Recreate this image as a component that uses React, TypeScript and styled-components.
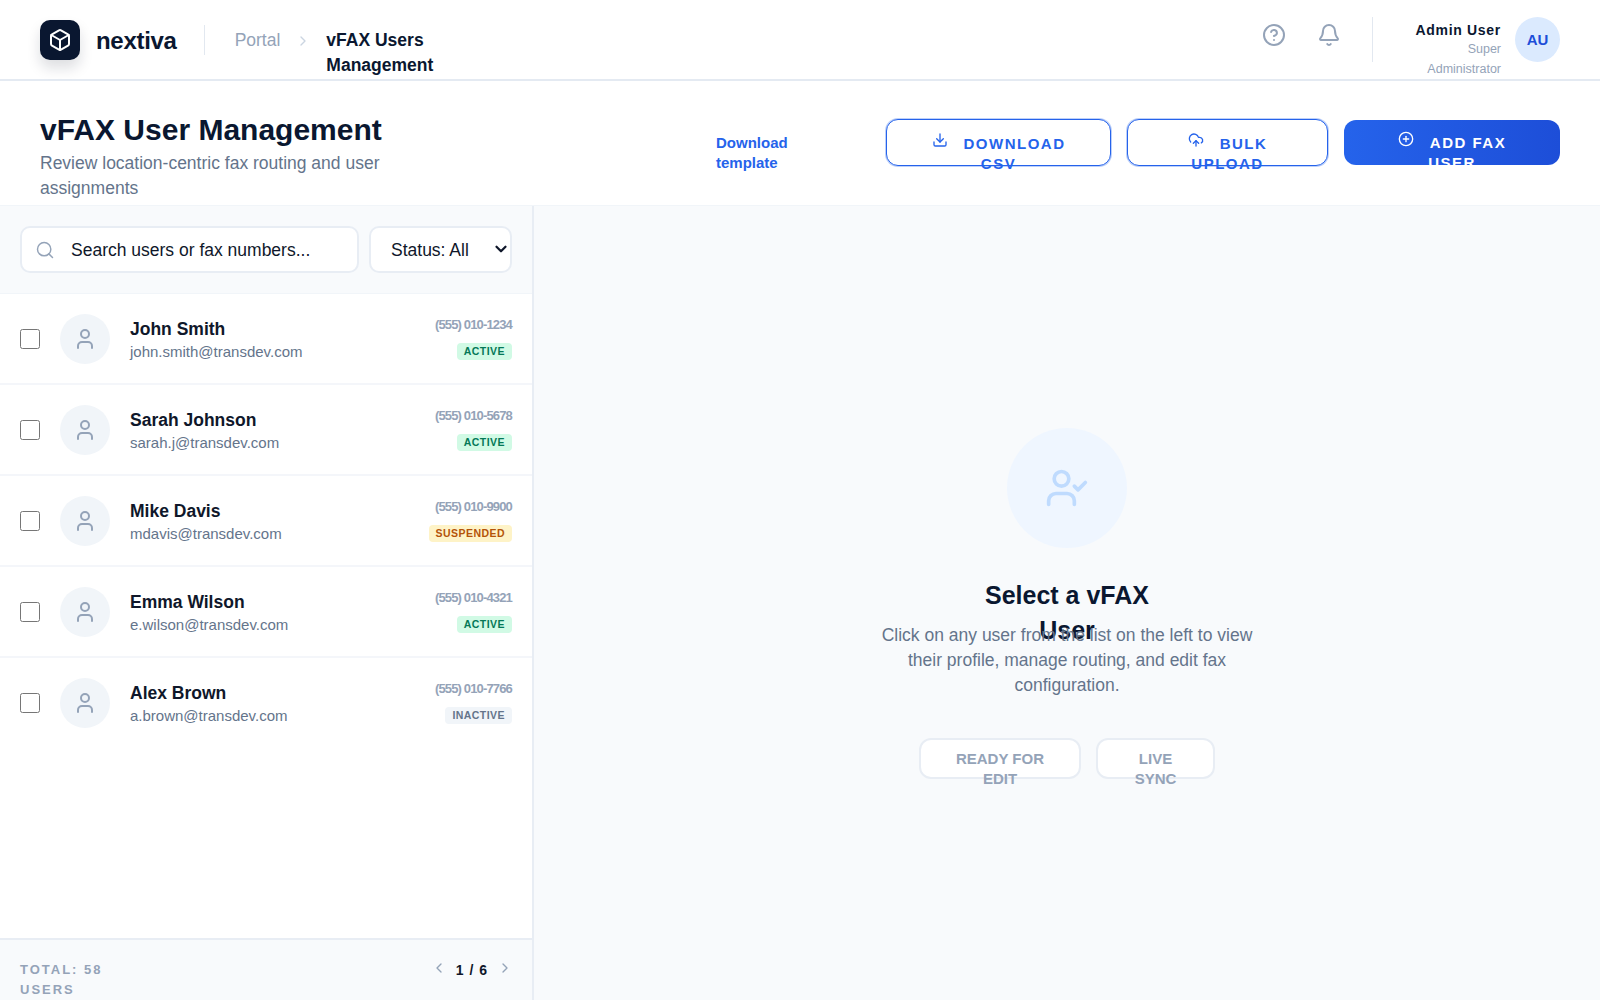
import styled, { createGlobalStyle } from "styled-components";
import {
  Bell,
  Box,
  ChevronDown,
  ChevronLeft,
  ChevronRight,
  CircleHelp,
  CirclePlus,
  CloudUpload,
  Download,
  Search,
  User,
  UserCheck,
} from "lucide-react";

const users = [
  { name: "John Smith", email: "john.smith@transdev.com", phone: "(555) 010-1234", status: "ACTIVE" },
  { name: "Sarah Johnson", email: "sarah.j@transdev.com", phone: "(555) 010-5678", status: "ACTIVE" },
  { name: "Mike Davis", email: "mdavis@transdev.com", phone: "(555) 010-9900", status: "SUSPENDED" },
  { name: "Emma Wilson", email: "e.wilson@transdev.com", phone: "(555) 010-4321", status: "ACTIVE" },
  { name: "Alex Brown", email: "a.brown@transdev.com", phone: "(555) 010-7766", status: "INACTIVE" },
];

export default function App() {
  return (
    <>
      <GlobalStyle />
      <S.Page>
        <S.Header>
          <S.LogoMark>
            <Box size={24} strokeWidth={2} />
          </S.LogoMark>
          <S.LogoText>nextiva</S.LogoText>
          <S.HeaderDivider />
          <S.Crumbs>
            <S.CrumbMuted>Portal</S.CrumbMuted>
            <S.CrumbArrow>
              <ChevronRight size={16} />
            </S.CrumbArrow>
            <S.CrumbCurrent>vFAX Users Management</S.CrumbCurrent>
          </S.Crumbs>
          <S.HeaderRight>
            <S.IconSlot>
              <CircleHelp size={24} strokeWidth={2} />
            </S.IconSlot>
            <S.IconSlot>
              <Bell size={24} strokeWidth={2} />
            </S.IconSlot>
            <S.UserDivider />
            <S.UserInfo>
              <S.UserName>Admin User</S.UserName>
              <S.UserRole>Super Administrator</S.UserRole>
            </S.UserInfo>
            <S.Avatar>AU</S.Avatar>
          </S.HeaderRight>
        </S.Header>

        <S.SubHeader>
          <S.TitleBlock>
            <S.Title>vFAX User Management</S.Title>
            <S.Subtitle>Review location-centric fax routing and user assignments</S.Subtitle>
          </S.TitleBlock>
          <S.Actions>
            <S.TemplateLink>Download template</S.TemplateLink>
            <S.OutlineButton $width={225}>
              <Download size={16} />
              DOWNLOAD CSV
            </S.OutlineButton>
            <S.OutlineButton $width={201}>
              <CloudUpload size={16} />
              BULK UPLOAD
            </S.OutlineButton>
            <S.PrimaryButton>
              <CirclePlus size={16} />
              ADD FAX USER
            </S.PrimaryButton>
          </S.Actions>
        </S.SubHeader>

        <S.Body>
          <S.ListPanel>
            <S.Filters>
              <S.SearchBox>
                <Search size={20} strokeWidth={1.75} />
                <S.SearchInput placeholder="Search users or fax numbers..." />
              </S.SearchBox>
              <S.SelectWrap>
                <S.StatusSelect defaultValue="all">
                  <option value="all">Status: All</option>
                </S.StatusSelect>
                <ChevronDown size={18} strokeWidth={3} />
              </S.SelectWrap>
            </S.Filters>
            <S.Rows>
              {users.map((u) => (
                <S.Row key={u.email}>
                  <S.Check type="checkbox" />
                  <S.RowAvatar>
                    <User size={24} strokeWidth={2} />
                  </S.RowAvatar>
                  <S.RowMain>
                    <S.RowName>{u.name}</S.RowName>
                    <S.RowEmail>{u.email}</S.RowEmail>
                  </S.RowMain>
                  <S.RowMeta>
                    <S.Phone>{u.phone}</S.Phone>
                    <S.Badge $status={u.status}>{u.status}</S.Badge>
                  </S.RowMeta>
                </S.Row>
              ))}
            </S.Rows>
            <S.Footer>
              <S.Total>TOTAL: 58 USERS</S.Total>
              <S.Pager>
                <ChevronLeft size={16} />
                <S.PageText>1 / 6</S.PageText>
                <ChevronRight size={16} />
              </S.Pager>
            </S.Footer>
          </S.ListPanel>

          <S.Detail>
            <S.EmptyCircle>
              <UserCheck size={44} strokeWidth={2} />
            </S.EmptyCircle>
            <S.EmptyTitle>Select a vFAX User</S.EmptyTitle>
            <S.EmptyText>
              Click on any user from the list on the left to view their profile, manage routing, and
              edit fax configuration.
            </S.EmptyText>
            <S.Chips>
              <S.Chip $width={162}>READY FOR EDIT</S.Chip>
              <S.Chip $width={119}>LIVE SYNC</S.Chip>
            </S.Chips>
          </S.Detail>
        </S.Body>
      </S.Page>
    </>
  );
}

const GlobalStyle = createGlobalStyle`
  * { box-sizing: border-box; }
  html, body { margin: 0; padding: 0; height: 100%; }
  body {
    font-family: "Liberation Sans", Arial, sans-serif;
    background: #fff;
    color: #0f172a;
    overflow: hidden;
  }
`;

const badgeColors: Record<string, { bg: string; fg: string }> = {
  ACTIVE: { bg: "#d1fae5", fg: "#047857" },
  SUSPENDED: { bg: "#fef3c7", fg: "#b45309" },
  INACTIVE: { bg: "#f1f5f9", fg: "#64748b" },
};

const S = {
  Page: styled.div`
    height: 1000px;
    display: flex;
    flex-direction: column;
  `,
  Header: styled.header`
    flex: 0 0 81px;
    display: flex;
    align-items: center;
    padding: 0 40px;
    background: #fff;
    border-bottom: 2px solid #e4eaf2;
  `,
  LogoMark: styled.div`
    width: 40px;
    height: 40px;
    border-radius: 10px;
    background: #0a1730;
    color: #fff;
    display: flex;
    align-items: center;
    justify-content: center;
    box-shadow: 0 8px 14px rgba(15, 23, 42, 0.14);
  `,
  LogoText: styled.div`
    margin: 2px 0 0 16px;
    font-size: 24px;
    font-weight: 700;
    letter-spacing: -0.3px;
    color: #0a1730;
  `,
  HeaderDivider: styled.div`
    width: 1px;
    height: 30px;
    margin-left: 27px;
    background: #e2e8f0;
  `,
  Crumbs: styled.nav`
    display: flex;
    align-items: flex-start;
    height: 25px;
    margin: 2px 0 0 30px;
    font-size: 17.5px;
    line-height: 25px;
  `,
  CrumbMuted: styled.span`
    color: #94a3b8;
  `,
  CrumbArrow: styled.span`
    display: flex;
    align-items: center;
    height: 25px;
    margin: 0 15px;
    color: #cbd5e1;
  `,
  CrumbCurrent: styled.span`
    width: 120px;
    color: #0a1730;
    font-weight: 700;
  `,
  HeaderRight: styled.div`
    margin-left: auto;
    display: flex;
    align-items: center;
  `,
  IconSlot: styled.div`
    display: flex;
    margin-right: 31px;
    margin-top: -9px;
    color: #94a3b8;
  `,
  UserDivider: styled.div`
    width: 1px;
    height: 45px;
    background: #e2e8f0;
  `,
  UserInfo: styled.div`
    width: 128px;
    height: 45px;
    text-align: right;
  `,
  UserName: styled.div`
    font-size: 14px;
    line-height: 20px;
    margin-top: 3px;
    font-weight: 700;
    letter-spacing: 0.7px;
    color: #0a1730;
  `,
  UserRole: styled.div`
    width: 90px;
    margin: 0 0 0 auto;
    font-size: 12.5px;
    line-height: 19.5px;
    color: #94a3b8;
  `,
  Avatar: styled.div`
    width: 45px;
    height: 45px;
    margin-left: 14px;
    border-radius: 50%;
    background: #dbeafe;
    color: #1d4ed8;
    font-size: 15px;
    font-weight: 700;
    display: flex;
    align-items: center;
    justify-content: center;
  `,
  SubHeader: styled.section`
    flex: 0 0 125px;
    display: flex;
    justify-content: space-between;
    padding: 31px 40px 0;
    border-bottom: 1px solid #f1f5f9;
  `,
  TitleBlock: styled.div`
    width: 380px;
  `,
  Title: styled.h1`
    margin: 0;
    font-size: 30px;
    line-height: 36px;
    font-weight: 700;
    color: #0a1730;
    white-space: nowrap;
  `,
  Subtitle: styled.p`
    margin: 3px 0 0;
    font-size: 17.5px;
    line-height: 25px;
    color: #64748b;
  `,
  Actions: styled.div`
    display: flex;
    align-items: center;
    gap: 16px;
    height: 48px;
    margin-top: 6px;
  `,
  TemplateLink: styled.a`
    width: 90px;
    margin: 22px 64px 0 0;
    font-size: 15px;
    line-height: 20px;
    font-weight: 700;
    color: #2563eb;
  `,
  OutlineButton: styled.button<{ $width: number }>`
    width: ${(p) => p.$width}px;
    height: 47px;
    padding: 12px 40px 0;
    border: 1px solid #2563eb;
    border-radius: 12px;
    background: #fff;
    box-shadow: 0 0 0 1px rgba(37, 99, 235, 0.3);
    color: #2563eb;
    font-family: inherit;
    font-size: 15px;
    line-height: 20px;
    font-weight: 700;
    letter-spacing: 1.5px;
    text-align: center;
    & svg {
      margin-right: 16px;
      vertical-align: 1px;
    }
  `,
  PrimaryButton: styled.button`
    width: 216px;
    height: 45px;
    padding: 11px 40px 0;
    border: 0;
    border-radius: 12px;
    background: linear-gradient(90deg, #2563eb, #1d4ed8);
    color: #fff;
    font-family: inherit;
    font-size: 15px;
    line-height: 20px;
    font-weight: 700;
    letter-spacing: 1.5px;
    text-align: center;
    & svg {
      margin-right: 16px;
      vertical-align: 1px;
    }
  `,
  Body: styled.main`
    flex: 1;
    min-height: 0;
    display: flex;
  `,
  ListPanel: styled.aside`
    flex: 0 0 534px;
    min-width: 0;
    display: flex;
    flex-direction: column;
    border-right: 2px solid #e8edf4;
    background: #fff;
  `,
  Filters: styled.div`
    flex: 0 0 88px;
    display: flex;
    gap: 10px;
    padding: 20px;
    background: #f8fafc;
    border-bottom: 1px solid #f1f5f9;
  `,
  SearchBox: styled.label`
    flex: 0 0 339px;
    min-width: 0;
    display: flex;
    align-items: center;
    gap: 16px;
    padding: 0 13px;
    border: 2px solid #e8edf4;
    border-radius: 10px;
    background: #fff;
    color: #94a3b8;
  `,
  SearchInput: styled.input`
    flex: 1;
    min-width: 0;
    width: 100%;
    border: 0;
    outline: 0;
    padding: 1px 0 0;
    font-family: inherit;
    font-size: 17.5px;
    color: #0f172a;
    &::placeholder {
      color: #0f172a;
      opacity: 1;
    }
  `,
  SelectWrap: styled.div`
    flex: 1;
    min-width: 0;
    position: relative;
    display: flex;
    & svg {
      position: absolute;
      right: 2px;
      top: 14px;
      color: #0f172a;
      pointer-events: none;
    }
  `,
  StatusSelect: styled.select`
    width: 100%;
    padding: 0 5px 0 20px;
    appearance: none;
    border: 2px solid #e8edf4;
    border-radius: 10px;
    background: #fff;
    font-family: inherit;
    font-size: 17.5px;
    color: #0f172a;
  `,
  Rows: styled.div`
    flex: 1;
  `,
  Row: styled.div`
    height: 90.9px;
    display: flex;
    align-items: center;
    padding: 2px 20px 0;
    border-bottom: 2px solid #f4f6fa;
    &:last-child {
      padding-top: 0;
      border-bottom: 0;
    }
  `,
  Check: styled.input`
    width: 20px;
    height: 20px;
    margin: 0;
    flex: none;
  `,
  RowAvatar: styled.div`
    width: 50px;
    height: 50px;
    margin-left: 20px;
    border-radius: 50%;
    flex: none;
    background: #f1f5f9;
    color: #94a3b8;
    display: flex;
    align-items: center;
    justify-content: center;
  `,
  RowMain: styled.div`
    flex: 1;
    margin-left: 20px;
  `,
  RowName: styled.div`
    font-size: 17.5px;
    line-height: 24px;
    font-weight: 700;
    color: #0f172a;
  `,
  RowEmail: styled.div`
    margin-top: 1px;
    font-size: 15px;
    line-height: 20px;
    color: #64748b;
  `,
  RowMeta: styled.div`
    display: flex;
    flex-direction: column;
    align-items: flex-end;
    gap: 8px;
    padding-bottom: 3px;
  `,
  Phone: styled.div`
    font-size: 13px;
    line-height: 20px;
    font-weight: 700;
    letter-spacing: -0.85px;
    color: #94a3b8;
  `,
  Badge: styled.span<{ $status: string }>`
    height: 17px;
    padding: 0 7px;
    border-radius: 4px;
    font-size: 10.5px;
    line-height: 17px;
    font-weight: 700;
    letter-spacing: 0.45px;
    background: ${(p) => badgeColors[p.$status].bg};
    color: ${(p) => badgeColors[p.$status].fg};
  `,
  Footer: styled.footer`
    flex: 0 0 61px;
    display: flex;
    justify-content: space-between;
    padding: 20px 20px 0;
    background: #f8fafc;
    border-top: 2px solid #e8edf4;
  `,
  Total: styled.div`
    width: 120px;
    font-size: 13px;
    line-height: 20px;
    font-weight: 700;
    letter-spacing: 2px;
    color: #94a3b8;
  `,
  Pager: styled.div`
    display: flex;
    align-items: flex-start;
    gap: 9px;
    margin-right: -1px;
    color: #94a3b8;
  `,
  PageText: styled.span`
    font-size: 14px;
    line-height: 20px;
    font-weight: 700;
    letter-spacing: 1px;
    color: #0f172a;
  `,
  Detail: styled.section`
    flex: 1;
    display: flex;
    flex-direction: column;
    align-items: center;
    justify-content: center;
    background: #f8fafc;
  `,
  EmptyCircle: styled.div`
    width: 120px;
    height: 120px;
    border-radius: 50%;
    background: #eff6ff;
    color: #bfdbfe;
    display: flex;
    align-items: center;
    justify-content: center;
  `,
  EmptyTitle: styled.h2`
    width: 200px;
    height: 45px;
    margin: 30px 0 0;
    font-size: 25px;
    line-height: 35px;
    font-weight: 700;
    text-align: center;
    color: #0a1730;
  `,
  EmptyText: styled.p`
    width: 384px;
    margin: 0;
    font-size: 17.5px;
    line-height: 25px;
    text-align: center;
    color: #64748b;
  `,
  Chips: styled.div`
    display: flex;
    gap: 15px;
    margin-top: 40px;
  `,
  Chip: styled.div<{ $width: number }>`
    width: ${(p) => p.$width}px;
    height: 41px;
    padding: 9px 30px 0;
    border: 2px solid #e8edf4;
    border-radius: 12px;
    background: #fff;
    font-size: 15px;
    line-height: 20px;
    font-weight: 700;
    text-align: center;
    color: #94a3b8;
  `,
};
